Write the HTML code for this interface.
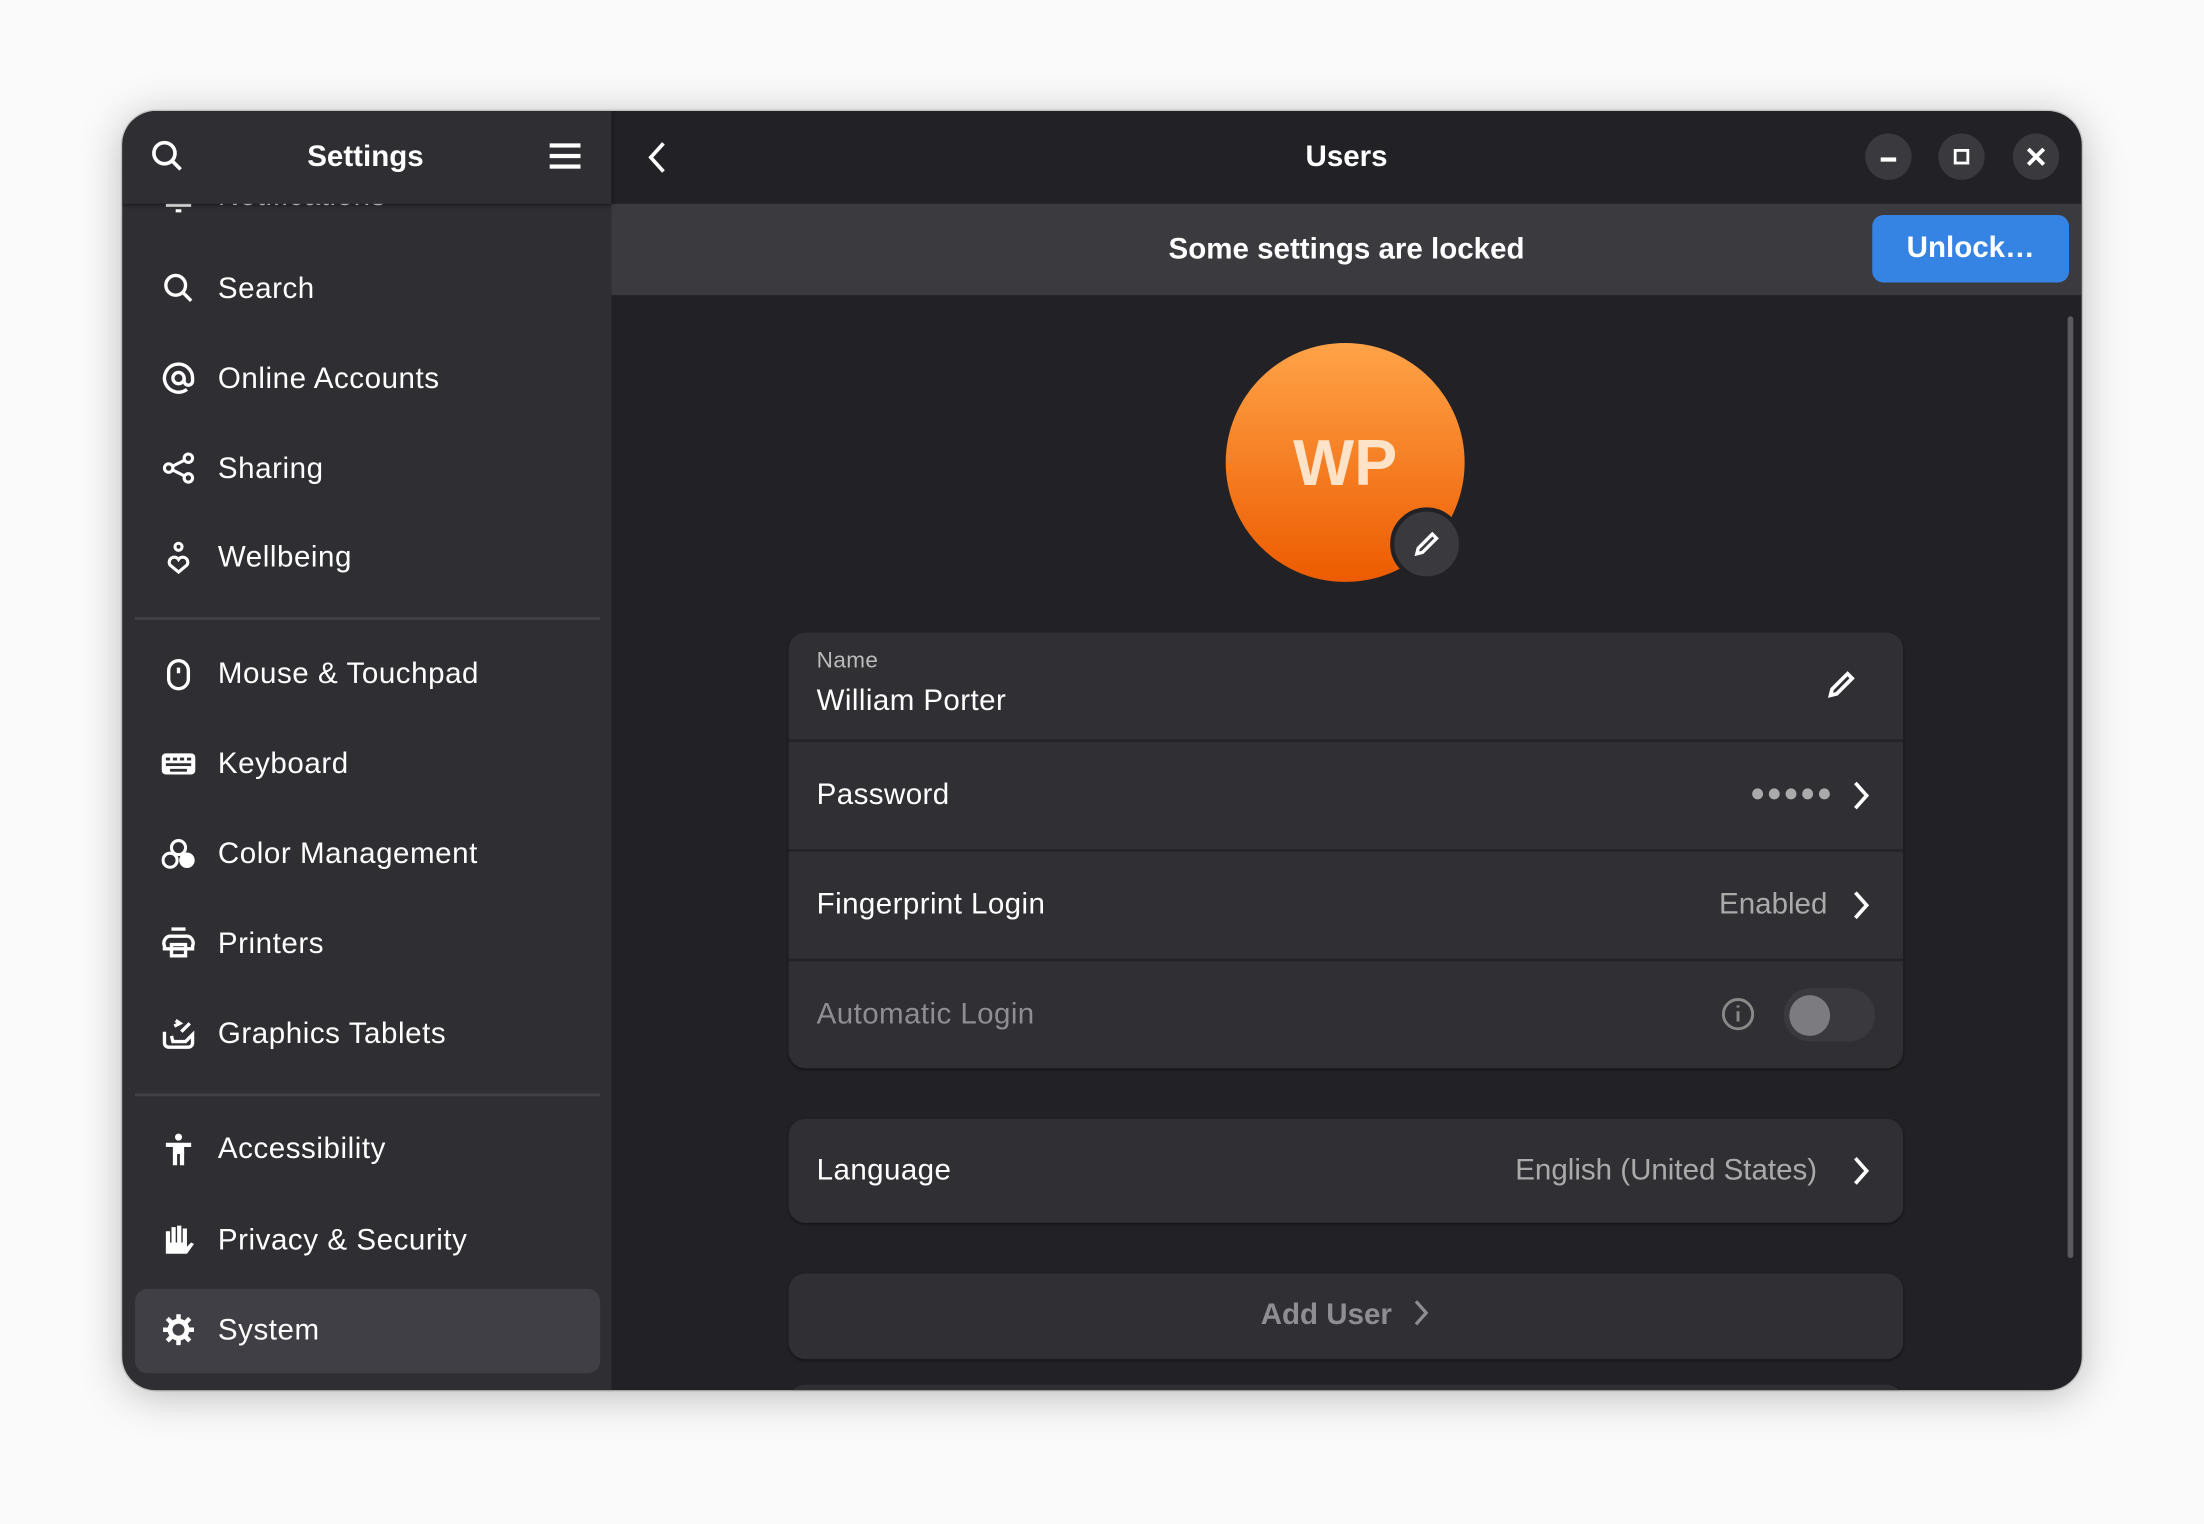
<!DOCTYPE html>
<html><head><meta charset="utf-8"><style>
html,body{margin:0;padding:0;width:2204px;height:1524px;overflow:hidden;background:#fafafa;}
#s{position:absolute;left:0;top:0;width:1568px;height:1084px;transform:scale(1.4056);transform-origin:0 0;font-family:"Liberation Sans",sans-serif;}
.a{position:absolute;}
.win{left:87px;top:79px;width:1394px;height:910px;border-radius:24px;overflow:hidden;background:#222226;box-shadow:0 4px 30px rgba(0,0,0,.25),0 0 0 1px rgba(0,0,0,.15);}
.side{left:0;top:0;width:348px;height:910px;background:#2e2e33;}
.sh{left:0;top:0;width:348px;height:66px;background:#2e2e33;box-shadow:0 1px 3px rgba(0,0,0,.5);z-index:2;}
.it{position:absolute;left:68px;color:#fff;font-size:21px;line-height:30px;letter-spacing:0.4px;}
.ic{position:absolute;left:28px;width:24px;height:24px;}
.sep{position:absolute;left:9px;width:331px;height:2px;background:#414146;}
.card{position:absolute;left:474px;width:793px;background:#303034;border-radius:12px;box-shadow:0 1px 2px rgba(0,0,0,.4);}
.row{position:absolute;left:0;color:#fff;font-size:21px;letter-spacing:0.3px;}
.rs{position:absolute;left:0;width:793px;height:2px;background:#242428;}
.wb{position:absolute;top:16px;width:33px;height:33px;border-radius:50%;background:#3a3a3e;}
</style></head><body><div id="s">
<div class="a win">
 <div class="a side">
  <svg class="ic" style="top:50px" viewBox="0 0 24 24" fill="none" stroke="#fff" stroke-width="2.2"><path d="M6 17V11a6 6 0 0 1 12 0v6M3 17h18M10 21h4"/></svg><div class="it" style="top:46px;opacity:.9">Notifications</div>
  <svg class="ic" style="top:114px" viewBox="0 0 24 24" fill="none" stroke="#fff" stroke-width="2.4"><circle cx="10" cy="10" r="7"/><path d="M15 15l6 6"/></svg><div class="it" style="top:112px">Search</div>
  <svg class="ic" style="top:178px" viewBox="0 0 24 24" fill="none" stroke="#fff" stroke-width="2.4"><circle cx="12" cy="12" r="4"/><path d="M16 12v2a3 3 0 0 0 6 0v-2a10 10 0 1 0-4 8"/></svg><div class="it" style="top:176px">Online Accounts</div>
  <svg class="ic" style="top:242px" viewBox="0 0 24 24" fill="none" stroke="#fff" stroke-width="2.2"><circle cx="5" cy="12" r="3"/><circle cx="19" cy="5" r="3"/><circle cx="19" cy="19" r="3"/><path d="M8 10.5l8-4M8 13.5l8 4"/></svg><div class="it" style="top:240px">Sharing</div>
  <svg class="ic" style="top:306px" viewBox="0 0 24 24" fill="none" stroke="#fff" stroke-width="2.2"><circle cx="12" cy="4" r="2.5"/><path d="M12 22l-6-5a3.5 3.5 0 0 1 6-4 3.5 3.5 0 0 1 6 4z"/></svg><div class="it" style="top:303px">Wellbeing</div>
  <div class="sep" style="top:360px"></div>
  <svg class="ic" style="top:389px" viewBox="0 0 24 24" fill="none" stroke="#fff" stroke-width="2.4"><rect x="5" y="2" width="14" height="20" rx="7"/><path d="M12 7v4"/></svg><div class="it" style="top:386px">Mouse &amp; Touchpad</div>
  <svg class="ic" style="top:453px" viewBox="0 0 24 24"><rect x="0" y="4" width="24" height="15" rx="3" fill="#fff"/><g fill="#2e2e33"><rect x="3" y="7" width="3" height="2"/><rect x="8" y="7" width="3" height="2"/><rect x="13" y="7" width="3" height="2"/><rect x="18" y="7" width="3" height="2"/><rect x="3" y="11" width="18" height="2"/><rect x="6" y="15" width="12" height="2"/></g></svg><div class="it" style="top:450px">Keyboard</div>
  <svg class="ic" style="top:517px" viewBox="0 0 24 24" fill="#fff"><circle cx="12" cy="7" r="5" fill="none" stroke="#fff" stroke-width="2.2"/><circle cx="6" cy="16" r="5" fill="none" stroke="#fff" stroke-width="2.2"/><circle cx="18" cy="16" r="5.5"/></svg><div class="it" style="top:514px">Color Management</div>
  <svg class="ic" style="top:580px" viewBox="0 0 24 24" fill="none" stroke="#fff" stroke-width="2.4"><path d="M7 2h10M2 14a5 5 0 0 1 5-7h10a5 5 0 0 1 5 7v2H2zM7 13h10v8H7z"/></svg><div class="it" style="top:578px">Printers</div>
  <svg class="ic" style="top:645px" viewBox="0 0 24 24" fill="none" stroke="#fff" stroke-width="2.4"><path d="M2 10v8a3 3 0 0 0 3 3h14a3 3 0 0 0 3-3v-6l-5 5H8l-1-4M10 2l3 2-4 2M14 10l6-6"/></svg><div class="it" style="top:642px">Graphics Tablets</div>
  <div class="sep" style="top:699px"></div>
  <svg class="ic" style="top:727px" viewBox="0 0 24 24" fill="#fff"><circle cx="12" cy="3" r="2.5"/><rect x="3" y="7" width="18" height="3"/><rect x="8" y="8" width="8" height="7"/><rect x="8" y="14" width="3" height="9"/><rect x="13" y="14" width="3" height="9"/></svg><div class="it" style="top:724px">Accessibility</div>
  <svg class="ic" style="top:791px" viewBox="0 0 24 24" fill="#fff"><path d="M3 6h3v8h1V3h3v11h1V2h3v12h1V4h3v13l3-3 2 1-5 7H3z"/></svg><div class="it" style="top:789px">Privacy &amp; Security</div>
  <div class="a" style="left:9px;top:838px;width:331px;height:60px;border-radius:9px;background:#3f3f45"></div>
  <svg class="ic" style="top:855px" viewBox="0 0 24 24" fill="none" stroke="#fff"><circle cx="12" cy="12" r="6" stroke-width="3.5"/><path d="M12 1v5M12 18v5M1 12h5M18 12h5M4 4l3.5 3.5M16.5 16.5L20 20M20 4l-3.5 3.5M7.5 16.5L4 20" stroke-width="3.2"/></svg><div class="it" style="top:853px">System</div>
 </div>
 <div class="a sh">
  <svg class="a" style="left:20px;top:20px;width:24px;height:24px" viewBox="0 0 24 24" fill="none" stroke="#fff" stroke-width="2.6"><circle cx="10" cy="10" r="7.5"/><path d="M15.5 15.5l6 6"/></svg>
  <div class="a" style="left:0;width:346px;top:21px;text-align:center;color:#fff;font-weight:bold;font-size:21px">Settings</div>
  <svg class="a" style="left:304px;top:22px;width:22px;height:20px" viewBox="0 0 22 20" fill="#fff"><rect y="1" width="22" height="3"/><rect y="8.5" width="22" height="3"/><rect y="16" width="22" height="3"/></svg>
 </div>
 <svg class="a" style="left:372px;top:20px;width:16px;height:26px" viewBox="0 0 16 26" fill="none" stroke="#fff" stroke-width="2.6"><path d="M13 3L4 13l9 10"/></svg>
 <div class="a" style="left:348px;width:1046px;top:21px;text-align:center;color:#fff;font-weight:bold;font-size:21px">Users</div>
 <div class="wb" style="left:1240px"><div class="a" style="left:11px;top:17px;width:11px;height:3px;background:#fff"></div></div>
 <div class="wb" style="left:1292px"><div class="a" style="left:11px;top:11px;width:7px;height:7px;border:2.5px solid #fff"></div></div>
 <div class="wb" style="left:1345px"><svg class="a" style="left:10px;top:10px;width:13px;height:13px" viewBox="0 0 13 13" stroke="#fff" stroke-width="2.8"><path d="M1 1l11 11M12 1L1 12"/></svg></div>
 <div class="a" style="left:348px;top:66px;width:1046px;height:65px;background:#3a3a3f"></div>
 <div class="a" style="left:348px;top:87px;width:1046px;text-align:center;color:#fff;font-weight:bold;font-size:21px">Some settings are locked</div>
 <div class="a" style="left:1245px;top:74px;width:140px;height:48px;border-radius:8px;background:#3584e4;color:#fff;font-weight:bold;font-size:21px;line-height:48px;text-align:center">Unlock…</div>
 <div class="a" style="left:1384px;top:146px;width:4px;height:670px;border-radius:2px;background:#5a5a5f"></div>
 <div class="a" style="left:785px;top:165px;width:170px;height:170px;border-radius:50%;background:linear-gradient(#ffa348,#ed5b00);color:#ffe3c8;font-weight:bold;font-size:46px;line-height:170px;text-align:center">WP</div>
 <div class="a" style="left:902px;top:282px;width:46px;height:46px;border-radius:50%;background:#3a3a3e;border:3px solid #222226"><svg class="a" style="left:13px;top:13px;width:20px;height:20px" viewBox="0 0 20 20" fill="none" stroke="#fff" stroke-width="2.4"><path d="M3 17l1-4L14 3l3 3L7 16z"/></svg></div>
 <div class="card" style="top:371px;height:310px">
  <div class="row" style="top:12px;left:20px;font-size:16px;color:#bbb">Name</div>
  <div class="row" style="top:37px;left:20px">William Porter</div>
  <svg class="a" style="left:738px;top:26px;width:22px;height:22px" viewBox="0 0 20 20" fill="none" stroke="#fff" stroke-width="2.4"><path d="M3 17l1-4L14 3l3 3L7 16z"/></svg>
  <div class="rs" style="top:76px"></div>
  <div class="row" style="top:104px;left:20px">Password</div>
  <div class="a" style="left:684px;top:104px;color:#aaa;font-size:18px;letter-spacing:1px">●●●●●</div>
  <svg class="a" style="left:756px;top:105px;width:14px;height:22px" viewBox="0 0 14 22" fill="none" stroke="#fff" stroke-width="2.6"><path d="M3 2l8 9-8 9"/></svg>
  <div class="rs" style="top:154px"></div>
  <div class="row" style="top:182px;left:20px">Fingerprint Login</div>
  <div class="a" style="left:662px;top:182px;color:#aaa;font-size:21px">Enabled</div>
  <svg class="a" style="left:756px;top:183px;width:14px;height:22px" viewBox="0 0 14 22" fill="none" stroke="#fff" stroke-width="2.6"><path d="M3 2l8 9-8 9"/></svg>
  <div class="rs" style="top:232px"></div>
  <div class="row" style="top:260px;left:20px;color:#8e8e92">Automatic Login</div>
  <svg class="a" style="left:663px;top:259px;width:25px;height:25px" viewBox="0 0 24 24" fill="none" stroke="#888" stroke-width="2"><circle cx="12" cy="12" r="10"/><path d="M12 10v7M12 6v1.5"/></svg>
  <div class="a" style="left:708px;top:253px;width:65px;height:38px;border-radius:19px;background:#3a3a3e"><div class="a" style="left:4px;top:5px;width:29px;height:29px;border-radius:50%;background:#7c7c80"></div></div>
 </div>
 <div class="card" style="top:717px;height:74px">
  <div class="row" style="top:25px;left:20px">Language</div>
  <div class="a" style="left:517px;top:25px;color:#aaa;font-size:21px">English (United States)</div>
  <svg class="a" style="left:756px;top:26px;width:14px;height:22px" viewBox="0 0 14 22" fill="none" stroke="#fff" stroke-width="2.6"><path d="M3 2l8 9-8 9"/></svg>
 </div>
 <div class="card" style="top:827px;height:61px">
  <div class="a" style="left:0;width:793px;top:18px;text-align:center;color:#8e8e92;font-weight:bold;font-size:21px">Add User <svg style="width:14px;height:20px;vertical-align:-2px;margin-left:8px" viewBox="0 0 14 22" fill="none" stroke="#8e8e92" stroke-width="2.6"><path d="M3 2l8 9-8 9"/></svg></div>
 </div>
 <div class="card" style="top:906px;height:40px"></div>
</div>
</div></body></html>
